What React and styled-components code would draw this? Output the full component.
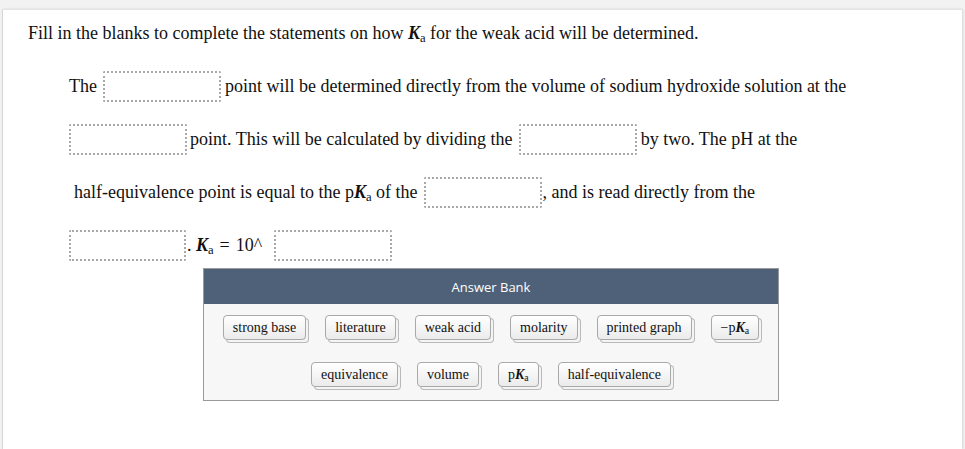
import styled, { createGlobalStyle } from 'styled-components';

const Global = createGlobalStyle`
  html, body {
    margin: 0;
    padding: 0;
    background: #f2f2f2;
  }
  body {
    font-family: "Liberation Serif", "Times New Roman", serif;
    color: #111;
  }
`;

const Card = styled.div`
  margin: 9px 3px 0 2px;
  background: #fff;
  border-left: 1px solid #d6d6d6;
  border-top: 1px solid #e4e4e4;
  box-shadow: 1px 0 2px rgba(0, 0, 0, 0.12);
  height: 440px;
  padding: 12px 0 0 25px;
  box-sizing: border-box;
`;

const Prompt = styled.p`
  margin: 0;
  font-size: 18px;
  line-height: 22px;
`;

const Statements = styled.div`
  margin-top: 16px;
  padding-left: 41px;
  font-size: 18px;
`;

const Line = styled.div`
  height: 53px;
  line-height: 53px;
  padding-left: ${({ $indent }) => $indent || 0}px;
  white-space: pre;
`;

const Blank = styled.span`
  display: inline-block;
  vertical-align: middle;
  width: ${({ $w }) => $w || 118}px;
  height: 31px;
  box-sizing: border-box;
  border: 2px dotted #a8a8a8;
  border-radius: 2px;
  margin: -2px ${({ $r }) => ($r === undefined ? 4 : $r)}px 0 ${({ $l }) => ($l === undefined ? 6 : $l)}px;
`;

const K = styled.i`
  font-weight: bold;
`;

const Sub = styled.sub`
  font-size: 0.7em;
  vertical-align: -0.25em;
  line-height: 0;
`;

const Eq = styled.span`
  margin: 0 6px;
`;

const Bank = styled.div`
  margin: -4px 0 0 175px;
  width: 574px;
  border: 1px solid #9a9a9a;
  background: #f7f7f7;
`;

const BankHead = styled.div`
  height: 35px;
  background: #4f6178;
  color: #fff;
  font-family: "Open Sans", "Liberation Sans", sans-serif;
  font-size: 13px;
  display: flex;
  align-items: center;
  justify-content: center;
`;

const BankBody = styled.div`
  padding: 11px 0 13px;
  display: flex;
  flex-direction: column;
  gap: 22px;
`;

const TileRow = styled.div`
  display: flex;
  justify-content: center;
  gap: 19px;
`;

const Tile = styled.div`
  box-sizing: border-box;
  height: 25px;
  padding: 0 9px;
  display: flex;
  align-items: center;
  font-size: 14px;
  color: #111;
  border: 1px solid #a9a9a9;
  border-radius: 4px;
  background: linear-gradient(#ffffff, #ebebeb);
  box-shadow: 3px 3px 0 -1px #f4f4f4, 3px 3px 0 0 #b9b9b9;
  white-space: pre;
`;

const Ka = () => (
  <>
    <K>K</K>
    <Sub>a</Sub>
  </>
);

const rowOne = ['strong base', 'literature', 'weak acid', 'molarity', 'printed graph', 'neg'];
const rowTwo = ['equivalence', 'volume', 'pka', 'half-equivalence'];

const label = (t) => {
  if (t === 'neg') return <span>−p<Ka /></span>;
  if (t === 'pka') return <span>p<Ka /></span>;
  return t;
};

export default function App() {
  return (
    <>
      <Global />
      <Card>
        <Prompt>
          Fill in the blanks to complete the statements on how <Ka /> for the weak acid will be determined.
        </Prompt>
        <Statements>
          <Line>
            The
            <Blank />
            point will be determined directly from the volume of sodium hydroxide solution at the
          </Line>
          <Line>
            <Blank $l={0} $r={3} />
            point. This will be calculated by dividing the
            <Blank />
            by two. The pH at the
          </Line>
          <Line $indent={5}>
            half-equivalence point is equal to the p<Ka /> of the
            <Blank $r={1} />
            , and is read directly from the
          </Line>
          <Line>
            <Blank $l={0} $r={1} $w={117} />
            . <Ka /><Eq>=</Eq>10^
            <Blank $l={12} />
          </Line>
        </Statements>
        <Bank>
          <BankHead>Answer Bank</BankHead>
          <BankBody>
            <TileRow>
              {rowOne.map((t) => (
                <Tile key={t}>{label(t)}</Tile>
              ))}
            </TileRow>
            <TileRow>
              {rowTwo.map((t) => (
                <Tile key={t}>{label(t)}</Tile>
              ))}
            </TileRow>
          </BankBody>
        </Bank>
      </Card>
    </>
  );
}
